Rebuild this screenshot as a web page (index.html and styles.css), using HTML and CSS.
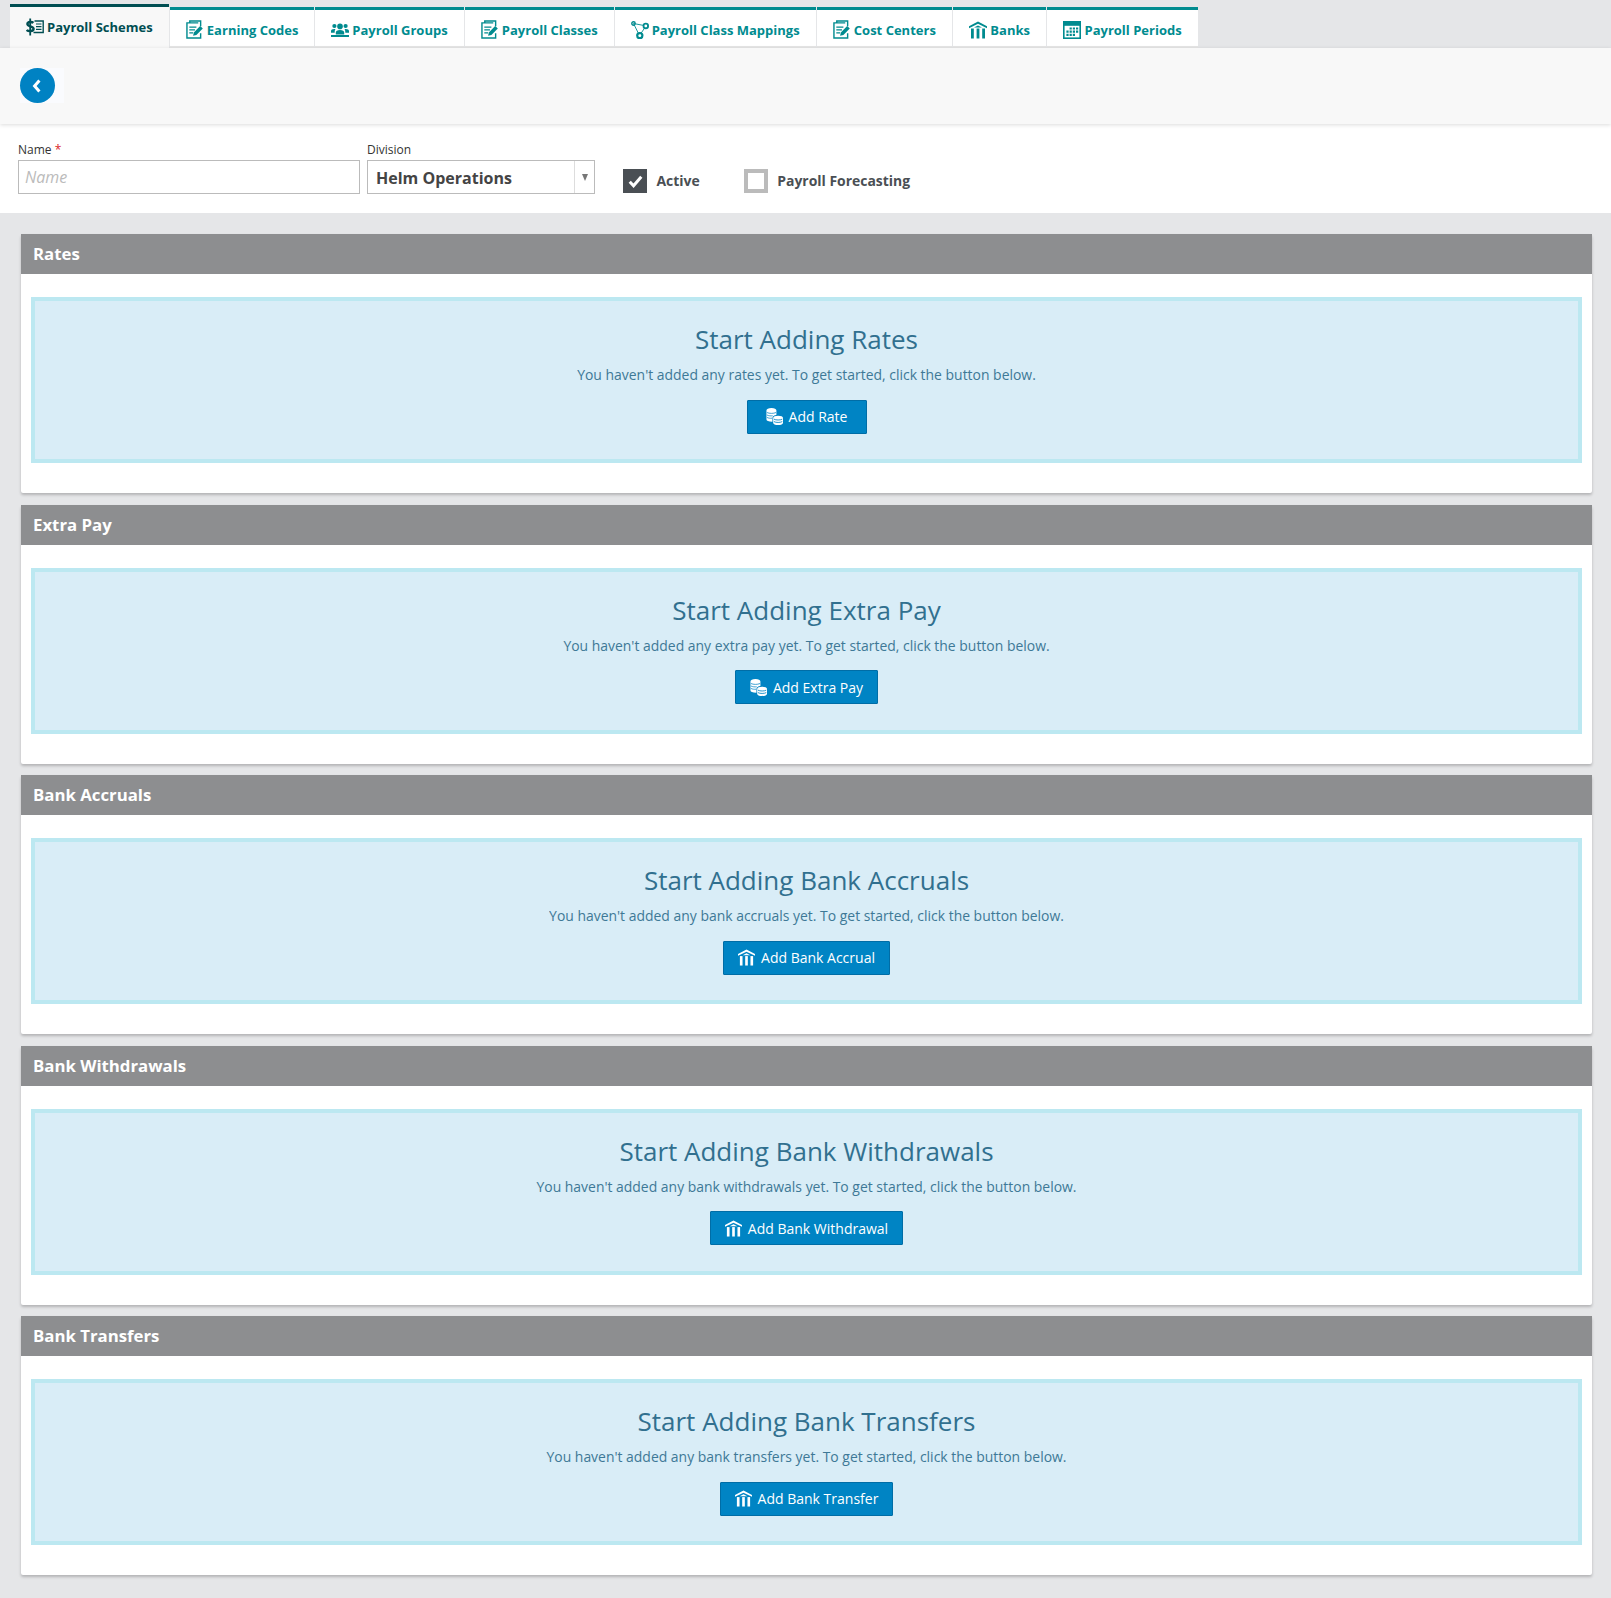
FILE: index.html
```html
<!DOCTYPE html>
<html lang="en">
<head>
<meta charset="utf-8">
<title>Payroll Schemes</title>
<link rel="stylesheet" href="styles.css">
</head>
<body>
<svg class="defs" width="0" height="0" aria-hidden="true">
  <symbol id="i-doc" viewBox="0 0 18 20">
    <path d="M4 3V1H15.5V6.5M15.5 14V19H1V3H13" fill="none" stroke="currentColor" stroke-width="1.5"/>
    <path d="M3.5 7.5H11M3.5 10.5H9.5M3.5 13.5H7.5" stroke="currentColor" stroke-width="1.3"/>
    <path d="M7.5 16.5L8.3 13.2L15 6.3L17.8 9L11 15.8Z" fill="currentColor"/>
  </symbol>
  <symbol id="i-users" viewBox="0 0 18 14">
    <circle cx="9" cy="3.4" r="2.8" fill="currentColor"/>
    <circle cx="3.4" cy="3" r="2.1" fill="currentColor"/>
    <circle cx="14.6" cy="3" r="2.1" fill="currentColor"/>
    <path d="M4.8 11.4V9.6C4.8 7.9 6.4 7 9 7S13.2 7.9 13.2 9.6V11.4ZM0 9.8V8C0 6.6 1.2 5.9 3.2 5.9C3.8 5.9 4.3 6 4.6 6.1C3.9 6.8 3.7 7.6 3.7 9.8ZM18 9.8V8C18 6.6 16.8 5.9 14.8 5.9C14.2 5.9 13.7 6 13.4 6.1C14.1 6.8 14.3 7.6 14.3 9.8Z" fill="currentColor"/>
    <rect x="0" y="12" width="18" height="2" fill="currentColor"/>
  </symbol>
  <symbol id="i-map" viewBox="0 0 18 18">
    <path d="M2.5 2.5L13 4.5M2.5 2.5L8 13.5M14 6.5L9.5 13" fill="none" stroke="currentColor" stroke-width=".9"/>
    <circle cx="2.5" cy="2.5" r="1.7" fill="none" stroke="currentColor" stroke-width="1.4"/>
    <circle cx="14.8" cy="5" r="2.3" fill="none" stroke="currentColor" stroke-width="1.8"/>
    <circle cx="8.8" cy="14.6" r="2.6" fill="none" stroke="currentColor" stroke-width="2.2"/>
  </symbol>
  <symbol id="i-bank" viewBox="0 0 18 18">
    <path d="M9 0.5L18 5.2V7.2L9 2.8L0 7.2V5.2Z" fill="currentColor"/>
    <path d="M9 4.4L13 6.6H5Z" fill="currentColor"/>
    <rect x="2" y="7.5" width="2.8" height="10" fill="currentColor"/>
    <rect x="7.6" y="7.5" width="2.8" height="10" fill="currentColor"/>
    <rect x="13.2" y="7.5" width="2.8" height="10" fill="currentColor"/>
  </symbol>
  <symbol id="i-cal" viewBox="0 0 18 18">
    <rect x=".8" y=".8" width="16.4" height="16.4" fill="none" stroke="currentColor" stroke-width="1.6"/>
    <rect x=".8" y=".8" width="16.4" height="4" fill="currentColor"/>
    <path d="M6.6 6.4h2.2v2.2H6.6zM9.8 6.4h2.2v2.2H9.8zM13 6.4h2.2v2.2H13zM3.4 9.6h2.2v2.2H3.4zM6.6 9.6h2.2v2.2H6.6zM9.8 9.6h2.2v2.2H9.8zM13 9.6h2.2v2.2H13zM3.4 12.8h2.2v2.2H3.4zM6.6 12.8h2.2v2.2H6.6zM9.8 12.8h2.2v2.2H9.8z" fill="currentColor"/>
  </symbol>
  <symbol id="i-money" viewBox="0 0 18 18">
    <path d="M8.5 3H17.2V14.5H7.5" fill="none" stroke="currentColor" stroke-width="1.4"/>
    <path d="M10 6H15.5M10 8.7H15.5M10 11.4H15.5" stroke="currentColor" stroke-width="1.2"/>
    <path d="M7.4 4.8C6.4 3.8 1.6 3.2 1.4 6C1.2 8.8 7.6 7.8 7.6 10.8C7.6 13.8 2 13.4 .6 12" fill="none" stroke="currentColor" stroke-width="2.4"/>
    <path d="M4.2 .5V17.5" stroke="currentColor" stroke-width="1.8"/>
  </symbol>
  <symbol id="i-coins" viewBox="0 0 18 18">
    <path d="M0.5 2.5C0.5 1 2.6 0 5.8 0S11 1 11 2.5V7.4C8.4 7.5 6.8 8.8 6.8 10.6V14.6C3 14.7 0.5 13.6 0.5 12.2Z" fill="currentColor"/>
    <path d="M1 4.8C3.5 6 8 6 10.6 4.8M1 7.4C3 8.4 5 8.5 7 8.2M1 10C2.6 10.8 4.4 11 6.4 10.8" fill="none" stroke="#0084c4" stroke-width=".8"/>
    <path d="M7.6 10.6C7.6 9.2 9.8 8.3 12.8 8.3S18 9.2 18 10.6V15.5C18 17 15.8 18 12.8 18S7.6 17 7.6 15.5Z" fill="currentColor"/>
    <path d="M8.4 11.8C10.5 13 15.2 13 17.2 11.8M8.4 14.4C10.5 15.6 15.2 15.6 17.2 14.4" fill="none" stroke="#0084c4" stroke-width=".9"/>
  </symbol>
</svg>

<nav class="tabs">
  <a class="tab tab-active"><svg class="tab-icon icon-money"><use href="#i-money"/></svg>Payroll Schemes</a>
  <a class="tab"><svg class="tab-icon icon-doc"><use href="#i-doc"/></svg>Earning Codes</a>
  <a class="tab"><svg class="tab-icon icon-users"><use href="#i-users"/></svg>Payroll Groups</a>
  <a class="tab"><svg class="tab-icon icon-doc"><use href="#i-doc"/></svg>Payroll Classes</a>
  <a class="tab"><svg class="tab-icon icon-map"><use href="#i-map"/></svg>Payroll Class Mappings</a>
  <a class="tab"><svg class="tab-icon icon-doc"><use href="#i-doc"/></svg>Cost Centers</a>
  <a class="tab"><svg class="tab-icon icon-bank"><use href="#i-bank"/></svg>Banks</a>
  <a class="tab"><svg class="tab-icon icon-cal"><use href="#i-cal"/></svg>Payroll Periods</a>
</nav>

<header class="toolbar">
  <div class="back-wrap">
    <button class="back" type="button" aria-label="Back">
      <svg viewBox="0 0 10 14" width="10" height="14"><path d="M7.4 1.6L2.6 7L7.4 12.4" fill="none" stroke="#fff" stroke-width="3"/></svg>
    </button>
  </div>
</header>

<form class="form">
  <div class="field field-name">
    <label class="label">Name <span class="req">*</span></label>
    <input class="input" type="text" placeholder="Name">
  </div>
  <div class="field field-division">
    <label class="label">Division</label>
    <div class="select">
      <span class="select-value">Helm Operations</span>
      <span class="select-arrow"><i class="triangle"></i></span>
    </div>
  </div>
  <div class="check check-active">
    <span class="box box-on"><svg viewBox="0 0 14 12" width="15" height="13"><path d="M1.6 6.2L5.2 10L12.4 1.6" fill="none" stroke="#fff" stroke-width="2.8"/></svg></span>
    <span class="check-label">Active</span>
  </div>
  <div class="check check-forecast">
    <span class="box box-off"></span>
    <span class="check-label">Payroll Forecasting</span>
  </div>
</form>

<main class="sections">
  <section class="panel">
    <h2 class="panel-head">Rates</h2>
    <div class="panel-body"><div class="empty">
      <h3 class="empty-title">Start Adding Rates</h3>
      <p class="empty-text">You haven't added any rates yet. To get started, click the button below.</p>
      <button class="add" type="button"><svg class="add-icon"><use href="#i-coins"/></svg>Add Rate</button>
    </div></div>
  </section>
  <section class="panel">
    <h2 class="panel-head">Extra Pay</h2>
    <div class="panel-body"><div class="empty">
      <h3 class="empty-title">Start Adding Extra Pay</h3>
      <p class="empty-text">You haven't added any extra pay yet. To get started, click the button below.</p>
      <button class="add" type="button"><svg class="add-icon"><use href="#i-coins"/></svg>Add Extra Pay</button>
    </div></div>
  </section>
  <section class="panel">
    <h2 class="panel-head">Bank Accruals</h2>
    <div class="panel-body"><div class="empty">
      <h3 class="empty-title">Start Adding Bank Accruals</h3>
      <p class="empty-text">You haven't added any bank accruals yet. To get started, click the button below.</p>
      <button class="add" type="button"><svg class="add-icon"><use href="#i-bank"/></svg>Add Bank Accrual</button>
    </div></div>
  </section>
  <section class="panel">
    <h2 class="panel-head">Bank Withdrawals</h2>
    <div class="panel-body"><div class="empty">
      <h3 class="empty-title">Start Adding Bank Withdrawals</h3>
      <p class="empty-text">You haven't added any bank withdrawals yet. To get started, click the button below.</p>
      <button class="add" type="button"><svg class="add-icon"><use href="#i-bank"/></svg>Add Bank Withdrawal</button>
    </div></div>
  </section>
  <section class="panel">
    <h2 class="panel-head">Bank Transfers</h2>
    <div class="panel-body"><div class="empty">
      <h3 class="empty-title">Start Adding Bank Transfers</h3>
      <p class="empty-text">You haven't added any bank transfers yet. To get started, click the button below.</p>
      <button class="add" type="button"><svg class="add-icon"><use href="#i-bank"/></svg>Add Bank Transfer</button>
    </div></div>
  </section>
</main>
</body>
</html>
```

FILE: styles.css
```css
* { box-sizing: border-box; }
html, body { margin: 0; padding: 0; }
body {
  background: #e5e6e8;
  font-family: "Open Sans", "Liberation Sans", sans-serif;
  color: #333;
  height: 1598px;
  overflow: hidden;
}
.defs { position: absolute; }

.tabs {
  display: flex;
  align-items: flex-end;
  height: 48px;
  padding-left: 10px;
}
.tab {
  display: flex;
  align-items: center;
  height: 41px;
  padding: 3px 16px 0;
  margin-right: 1px;
  background: #fff;
  border-top: 3px solid #008b8f;
  border-bottom: 2px solid #e6e6e6;
  color: #008b8f;
  font-size: 13px;
  font-weight: 700;
  white-space: nowrap;
}
.tab-active {
  height: 44px;
  padding: 0 16px 2px;
  background: #f8f8f8;
  border-top-color: #004e52;
  border-bottom: 0;
  color: #004e52;
}
.tab-icon { margin-right: 3.5px; flex: none; }
.icon-money { width: 18px; height: 18px; margin-right: 3px; }
.icon-doc { width: 17px; height: 19px; margin-right: 4.2px; }
.icon-users { width: 18px; height: 14px; margin-right: 3px; }
.icon-map { width: 18px; height: 18px; margin-right: 3px; }
.icon-bank { width: 18px; height: 18px; }
.icon-cal { width: 18px; height: 18px; }

.toolbar {
  position: relative;
  height: 76px;
  padding: 20px 0 0 20px;
  background: #f8f8f8;
  box-shadow: 0 1px 4px rgba(0, 0, 0, .14);
}
.back-wrap {
  width: 44px;
  height: 35px;
  background: #fafbfe;
}
.back {
  display: flex;
  align-items: center;
  justify-content: center;
  width: 35px;
  height: 35px;
  padding: 0 1px 0 0;
  border: 0;
  border-radius: 50%;
  background: #0082c3;
}

.form {
  display: flex;
  height: 89px;
  padding: 18px 0 0 18px;
  background: #fff;
}
.field { display: flex; flex-direction: column; }
.field-name { width: 342px; margin-right: 7px; }
.field-division { width: 228px; margin-right: 28px; }
.label { height: 18px; font-size: 12px; line-height: 16px; color: #333; }
.req { color: #d9252a; }
.input {
  height: 34px;
  padding: 0 6px;
  border: 1px solid #bbb;
  border-radius: 0;
  outline: 0;
  font: italic 16px "Open Sans", sans-serif;
}
.input::placeholder { color: #bbb; opacity: 1; }
.select {
  display: flex;
  height: 34px;
  border: 1px solid #bbb;
  align-items: stretch;
}
.select-value {
  flex: 1;
  padding-left: 8px;
  font-size: 16px;
  font-weight: 700;
  line-height: 34px;
  color: #444;
}
.select-arrow {
  display: flex;
  align-items: center;
  justify-content: center;
  width: 20px;
  border-left: 1px solid #ddd;
}
.triangle {
  width: 0;
  height: 0;
  border-left: 3.5px solid transparent;
  border-right: 3.5px solid transparent;
  border-top: 7px solid #777;
}
.check {
  display: flex;
  align-items: center;
  height: 24px;
  margin-top: 27px;
}
.check-active { margin-right: 44px; }
.box {
  display: flex;
  align-items: center;
  justify-content: center;
  width: 24px;
  height: 24px;
  margin-right: 9px;
}
.box-on { background: #4a4f54; }
.box-off { border: 4px solid #bbb; background: #fff; }
.check-label {
  margin: -2px 0 0 .5px;
  font-size: 13.95px;
  font-weight: 700;
  color: #4a4f54;
}

.sections {
  padding: 21px 19px 0 21px;
}
.panel {
  margin-bottom: 11.5px;
  background: #fff;
  border-radius: 2px;
  box-shadow: 0 2px 3px rgba(0, 0, 0, .22);
}
.panel-head {
  height: 40px;
  margin: 0;
  padding: 0 12px;
  background: #8d8e90;
  color: #fff;
  font-size: 16.8px;
  font-weight: 700;
  line-height: 40px;
}
.panel-body { padding: 23px 10px 30px; }
.empty {
  height: 166px;
  padding-top: 20px;
  background: #d9edf7;
  border: 4px solid #bce8f1;
  text-align: center;
  color: #31708f;
}
.empty-title {
  margin: 0;
  font-size: 26px;
  font-weight: 400;
  line-height: 37px;
}
.empty-text {
  margin: 7px 0 0;
  font-size: 13.95px;
  line-height: 20px;
  opacity: .92;
}
.add {
  display: inline-flex;
  align-items: center;
  justify-content: center;
  min-width: 120px;
  height: 34px;
  margin-top: 14.5px;
  padding: 0 14px;
  background: #0084c4;
  border: 1px solid #006da6;
  border-radius: 1px;
  color: #fff;
  font: 400 14px "Open Sans", sans-serif;
}
.add-icon { width: 17px; height: 17px; margin-right: 6px; flex: none; }
```
